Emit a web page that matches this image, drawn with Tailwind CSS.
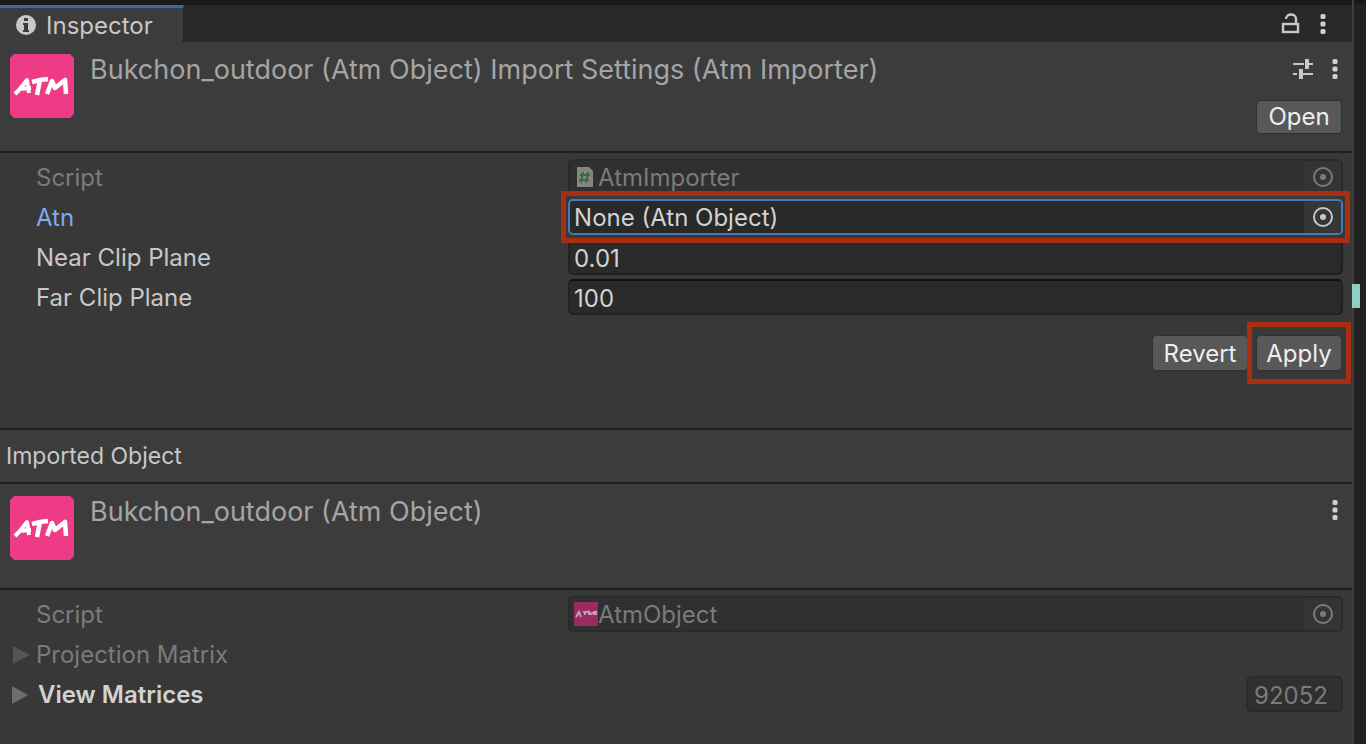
<!DOCTYPE html>
<html lang="en">

<head>
    <meta charset="UTF-8">
    <meta name="viewport" content="width=device-width, initial-scale=1.0">
    <script src="https://cdn.jsdelivr.net/npm/@tailwindcss/browser@4"></script>
    <title>Inspector</title>
</head>

<body class="flex min-h-screen bg-[#222222] font-['Inter',sans-serif] text-[24px] leading-8 text-[#c8c8c8]">
    <!-- shared icons -->
    <svg class="hidden" aria-hidden="true">
        <symbol id="dots" viewBox="0 0 6 20">
            <rect x="0.5" y="0" width="5" height="5" rx="1.5" />
            <rect x="0.5" y="7.5" width="5" height="5" rx="1.5" />
            <rect x="0.5" y="15" width="5" height="5" rx="1.5" />
        </symbol>
        <symbol id="picker" viewBox="0 0 22 22">
            <circle cx="11" cy="11" r="9" fill="none" stroke="currentColor" stroke-width="2" />
            <circle cx="11" cy="11" r="3" />
        </symbol>
        <symbol id="atm" viewBox="0 0 64 64">
            <path d="M4 0H60L64 4V60L60 64H4L0 60V4z" fill="#ee3b86" />
            <g fill="none" stroke="#fff" stroke-width="4" stroke-linejoin="round">
                <path d="M5 40L9 36L17 26L19 39 M9 35L21 34" />
                <path d="M22 28L30 26L38 25 M30 26L27 41" stroke-width="4.5" />
                <path d="M37 40L42 27L45 34L55 26L56 40" stroke-width="4.5" />
            </g>
        </symbol>
    </svg>

    <main class="flex min-w-0 flex-1 flex-col border-r-2 border-[#3f3f3f] bg-[#383838]">
        <div class="flex h-[42px] items-stretch justify-between border-t-5 border-[#191919] bg-[#282828]">
            <h1 class="flex w-[184px] items-center gap-[10px] border-t-3 border-r border-t-[#3a6a9f] border-r-[#232323] bg-[#3c3c3c] pl-4">
                <svg class="mb-px h-5 w-5" viewBox="0 0 20 20">
                    <circle cx="10" cy="10" r="10" fill="#c8c8c8" />
                    <path d="M8 3h4v3H8z M7 8h5v7h1v2H7v-2h1v-5H7z" fill="#3c3c3c" />
                </svg>
                <span class="pt-[2px]">Inspector</span>
            </h1>
            <div class="flex items-center gap-5 pr-[26px]">
                <button aria-label="Lock">
                    <svg class="h-6 w-5" viewBox="0 0 20 24" fill="none" stroke="#c8c8c8" stroke-width="2.4">
                        <rect x="3" y="12" width="15" height="8" />
                        <path d="M6 7C6 1 16 1 16 7V12" />
                    </svg>
                </button>
                <button aria-label="Tab menu"><svg class="h-5 w-[6px] fill-[#d0d0d0]"><use href="#dots" /></svg></button>
            </div>
        </div>

        <header class="flex h-[111px] items-start border-b-2 border-[#1f1f1f] bg-[#3c3c3c] px-[10px] pt-3">
            <svg class="h-16 w-16 shrink-0"><use href="#atm" /></svg>
            <h2 class="flex-1 pl-4 text-[27px] text-[#a5a5a5]">Bukchon_outdoor (Atm Object) Import Settings (Atm Importer)</h2>
            <div class="flex flex-col items-end gap-4">
                <div class="flex h-[30px] items-center gap-[18px] pr-1">
                    <button aria-label="Presets">
                        <svg class="h-5 w-[22px]" viewBox="0 0 22 20" fill="#c8c8c8">
                            <path d="M1 4h11v2H1z M13 0h4v10h-4z M17 4h4v2h-4z M1 14h4v2H1z M7 10h4v10H7z M11 14h10v2H11z" />
                        </svg>
                    </button>
                    <button aria-label="Importer menu"><svg class="h-5 w-[6px] fill-[#d0d0d0]"><use href="#dots" /></svg></button>
                </div>
                <button class="h-[34px] w-[86px] rounded-sm border border-[#303030] bg-[#585858] text-[#eeeeee]">Open</button>
            </div>
        </header>

        <section class="pt-1 pr-[9px]">
            <div class="flex h-10 items-center text-[#7b7b7b]">
                <label for="script" class="mr-1 w-[42%] shrink-0 pt-[2px] pl-9">Script</label>
                <div class="flex h-9 flex-1 items-center overflow-hidden rounded-[5px] border-2 border-[#2b2b2b] bg-[#303030]">
                    <svg class="mr-1 ml-[6px] h-5 w-[18px] shrink-0" viewBox="0 0 18 20">
                        <path d="M1 0h12l4 4v16H1z" fill="#858585" />
                        <path d="M7 5L5 16 M12 5L10 16 M4 8h10 M3 13h10" stroke="#3c6b40" stroke-width="2" />
                    </svg>
                    <input id="script" value="AtmImporter" disabled class="min-w-0 flex-1 pt-[2px]">
                    <button aria-label="Pick script" disabled class="flex h-full w-[37px] items-center justify-center bg-[#343434]"><svg class="h-[22px] w-[22px] fill-current"><use href="#picker" /></svg></button>
                </div>
            </div>
            <div class="flex h-10 items-center">
                <label for="atn" class="mr-1 w-[42%] shrink-0 pt-[2px] pl-9 text-[#81a9ed]">Atn</label>
                <div class="relative flex-1">
                    <div class="flex h-9 items-center overflow-hidden rounded-[5px] border-2 border-[#457ab8] bg-[#292929]">
                        <input id="atn" value="None (Atn Object)" class="min-w-0 flex-1 pt-[2px] pl-1 text-[#d2d2d2] outline-none">
                        <button aria-label="Pick Atn object" class="flex h-full w-[37px] items-center justify-center bg-[#363636]"><svg class="h-[22px] w-[22px] fill-current"><use href="#picker" /></svg></button>
                    </div>
                    <div class="pointer-events-none absolute -inset-x-[7px] -inset-y-2 z-10 border-5 border-[#a82e12]"></div>
                </div>
            </div>
            <div class="flex h-10 items-center">
                <label for="near" class="mr-1 w-[42%] shrink-0 pt-[2px] pl-9">Near Clip Plane</label>
                <input id="near" value="0.01" class="h-9 min-w-0 flex-1 rounded-[5px] border-2 border-[#222222] bg-[#2a2a2a] pt-[2px] pl-1 text-[#d2d2d2]">
            </div>
            <div class="flex h-10 items-center">
                <label for="far" class="mr-1 w-[42%] shrink-0 pt-[2px] pl-9">Far Clip Plane</label>
                <input id="far" value="100" class="h-9 min-w-0 flex-1 rounded-[5px] border-2 border-[#222222] border-t-[#111111] bg-[#2a2a2a] pt-[2px] pl-1 text-[#d2d2d2]">
            </div>
        </section>

        <div class="mb-[57px] flex justify-end gap-2 pt-[18px] pr-[10px] text-[#eeeeee]">
            <button class="h-9 w-[96px] rounded-sm border border-[#303030] bg-[#585858] pt-[2px]">Revert</button>
            <div class="relative">
                <button class="h-9 w-[86px] rounded-sm border border-[#303030] bg-[#585858] pt-[2px]">Apply</button>
                <div class="pointer-events-none absolute -inset-x-[9px] -inset-y-[13px] z-10 border-5 border-[#a82e12]"></div>
            </div>
        </div>

        <h2 class="flex h-14 items-center border-y-2 border-[#1f1f1f] bg-[#3c3c3c] pl-[6px] text-[23px]">Imported Object</h2>

        <header class="flex h-[106px] items-start border-b-2 border-[#1f1f1f] bg-[#3c3c3c] px-[10px] pt-3">
            <svg class="h-16 w-16 shrink-0"><use href="#atm" /></svg>
            <h2 class="flex-1 pl-4 text-[27px] text-[#a5a5a5]">Bukchon_outdoor (Atm Object)</h2>
            <button aria-label="Object menu" class="mt-1 mr-1"><svg class="h-5 w-[6px] fill-[#d0d0d0]"><use href="#dots" /></svg></button>
        </header>

        <section class="pt-1 pr-[9px] text-[#7b7b7b]">
            <div class="flex h-10 items-center">
                <label for="object-script" class="mr-1 w-[42%] shrink-0 pt-[2px] pl-9">Script</label>
                <div class="flex h-9 flex-1 items-center overflow-hidden rounded-[5px] border-2 border-[#2b2b2b] bg-[#303030]">
                    <svg class="ml-1 h-6 w-6 shrink-0" viewBox="0 0 24 24" fill="none" stroke="#c99bb2" stroke-width="2">
                        <path d="M0 0h24v24H0z" fill="#9c2a62" stroke="none" />
                        <path d="M2 15l3-5 2 5 M9 10h5 M11 10v3 M15 13v-3l2 2 3-2v3 M22 9v4" />
                    </svg>
                    <input id="object-script" value="AtmObject" disabled class="min-w-0 flex-1 pt-[2px]">
                    <button aria-label="Pick object script" disabled class="flex h-full w-[37px] items-center justify-center bg-[#343434]"><svg class="h-[22px] w-[22px] fill-current"><use href="#picker" /></svg></button>
                </div>
            </div>
            <button class="flex h-10 w-full items-center pt-[2px] pl-3">
                <svg class="mr-1 h-5 w-5 fill-[#545454]" viewBox="0 0 20 20"><path d="M1 1L18 10L1 19z" /></svg>
                Projection Matrix
            </button>
            <div class="flex h-10 items-center justify-between pl-[11px]">
                <button class="flex items-center pt-[2px] font-semibold text-[#d2d2d2]">
                    <svg class="mr-[7px] h-5 w-5 fill-[#6e6e6e]" viewBox="0 0 20 20"><path d="M1 1L17 10L1 19z" /></svg>
                    View Matrices
                </button>
                <input aria-label="View Matrices size" value="92052" disabled class="h-9 w-[97px] rounded-[5px] border-2 border-[#2b2b2b] bg-[#303030] pt-[2px] pl-[6px]">
            </div>
        </section>
    </main>

    <!-- neighbouring panel edge -->
    <aside class="w-3 shrink-0 border-t-5 border-[#191919] pt-[279px]">
        <div class="-ml-[2px] h-6 w-2 bg-[#93cdc8]"></div>
    </aside>
</body>

</html>
